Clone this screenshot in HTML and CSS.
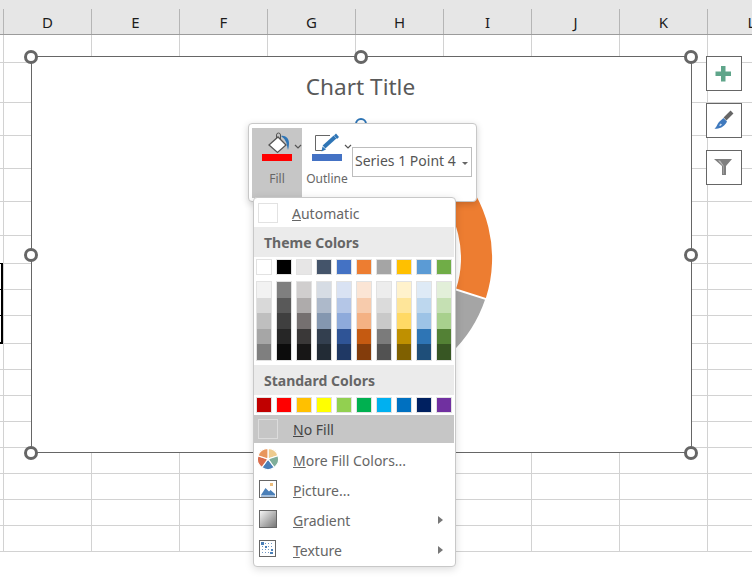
FILE: index.html
```html
<!DOCTYPE html>
<html lang="en">
<head>
  <meta charset="UTF-8" />
  <title>Chart fill menu</title>
  <link rel="stylesheet" href="styles.css">
</head>
<body>
  <div class="col-heads">
    <div class="col-head stub"></div>
    <div class="col-head">D</div>
    <div class="col-head">E</div>
    <div class="col-head">F</div>
    <div class="col-head">G</div>
    <div class="col-head">H</div>
    <div class="col-head">I</div>
    <div class="col-head">J</div>
    <div class="col-head">K</div>
    <div class="col-head">L</div>
  </div>

  <div class="rows">
    <div class="row h28"></div>
    <div class="row h40"></div>
    <div class="row h33"></div>
    <div class="row h33"></div>
    <div class="row h33"></div>
    <div class="row h34"></div>
    <div class="row h28"></div>
    <div class="row"></div>
    <div class="row"></div>
    <div class="row h28"></div>
    <div class="row"></div>
    <div class="row"></div>
    <div class="row"></div>
    <div class="row"></div>
    <div class="row"></div>
    <div class="row"></div>
    <div class="row"></div>
    <div class="row"></div>
  </div>

  <!-- selected cells peeking out at the left edge -->
  <div class="selected">
    <div class="sel-cell"></div>
    <div class="sel-cell"></div>
    <div class="sel-cell last"></div>
  </div>

  <div class="chart">
    <div class="chart-title">Chart Title</div>
    <svg class="donut" width="659" height="395" viewBox="32 57 659 395">
      <path fill="#ed7d31" d="M453.6 165.4 A131 131 0 0 1 485.9 298.0 L456.2 288.6 A100 100 0 0 0 431.7 187.3 Z" />
      <path fill="#a5a5a5" d="M485 299.8 A131 131 0 0 1 395 384.5 L387 354.6 A100 100 0 0 0 455.8 290.5 Z" />
      <path fill="none" stroke="#2e75b6" stroke-width="2" d="M356 124 A5 5 0 0 1 366 124" />
    </svg>
    <span class="handle h-tl"></span>
    <span class="handle h-tc"></span>
    <span class="handle h-tr"></span>
    <span class="handle h-ml"></span>
    <span class="handle h-mr"></span>
    <span class="handle h-bl"></span>
    <span class="handle h-bc"></span>
    <span class="handle h-br"></span>
  </div>

  <div class="side-tools">
    <div class="side-btn">
      <svg width="34" height="33" viewBox="0 0 34 33"><path fill="#5fa58a" d="M14 9h4.500v5.500H24v4.500h-5.500v5.500H14V19H8.500v-4.500H14z" /></svg>
    </div>
    <div class="side-btn">
      <svg width="34" height="33" viewBox="0 0 34 33">
        <path fill="none" stroke="#666" stroke-width="4" d="M25 8 L18 15" />
        <path fill="#3f79bd" d="M16.5 14 L20 17.5 C18 22 13 25.5 7.5 24.5 C10 23 10 20 12 18 C13.5 16.5 15 15.5 16.5 14Z" />
        <path fill="#c9d9ec" d="M13.500 19.500 L15 20.500 L13.500 22 L12 21.500Z" />
      </svg>
    </div>
    <div class="side-btn">
      <svg width="34" height="33" viewBox="0 0 34 33">
        <path fill="#7f7f7f" d="M7 8 H25 L19 15 V24 H15 V15 Z" />
        <path fill="#bdbdbd" d="M11 9.500 L16 15 V23 H16.500 V14.500 L13 9.500 Z" />
      </svg>
    </div>
  </div>

  <div class="toolbar">
    <div class="tool active">
      <svg class="tool-icon" width="50" height="26" viewBox="0 0 50 26">
        <path fill="none" stroke="#555" stroke-width="1" d="M24.500 13 V7 a2 2 0 0 1 4 0 V13" />
        <path fill="#fff" stroke="#555" stroke-width="1.300" d="M17 17 L26 9 L34 17 L25.500 24.500 Z" />
        <path fill="#2e75b6" d="M29 8 C33 7 37 10 37 15 C37 18 36.500 20 36 22 C35 19 35 15 33.500 13 C32.500 11 31 9.500 29 8Z" />
        <path fill="none" stroke="#555" stroke-width="1.200" d="M43 17 l3 3 l3 -3" />
      </svg>
      <div class="tool-swatch red"></div>
      <div class="tool-label">Fill</div>
    </div>
    <div class="tool">
      <svg class="tool-icon" width="50" height="26" viewBox="0 0 50 26">
        <path fill="none" stroke="#666" stroke-width="1" d="M28 7.500 H13.500 V22.500 H20" />
        <path fill="none" stroke="#2e75b6" stroke-width="4" d="M22 19 L33 9" />
        <path fill="#2e75b6" d="M19.500 23.500 L20.500 18.500 L24 21.500Z" />
        <path fill="#2e75b6" d="M34 5.500 L37 9 L35 11 L32 7.500Z" />
        <path fill="none" stroke="#555" stroke-width="1.200" d="M43 17 l3 3 l3 -3" />
      </svg>
      <div class="tool-swatch blue"></div>
      <div class="tool-label">Outline</div>
    </div>
    <div class="series-select">
      <span class="series-name">Series 1 Point 4</span>
      <span class="caret"></span>
    </div>
  </div>

  <div class="menu">
    <div class="menu-item first">
      <span class="icon-cell"><span class="big-swatch"></span></span>
      <span class="item-text"><u>A</u>utomatic</span>
    </div>

    <div class="menu-head">Theme Colors</div>
    <div class="swatches theme">
      <span class="sw c-ffffff"></span><span class="sw c-000000"></span><span class="sw c-e7e6e6"></span><span class="sw c-44546a"></span><span class="sw c-4472c4"></span><span class="sw c-ed7d31"></span><span class="sw c-a5a5a5"></span><span class="sw c-ffc000"></span><span class="sw c-5b9bd5"></span><span class="sw c-70ad47"></span>
    </div>
    <div class="swatches shades">
      <div class="shade"><i class="c-f2f2f2"></i><i class="c-d9d9d9"></i><i class="c-bfbfbf"></i><i class="c-a6a6a6"></i><i class="c-7f7f7f"></i></div>
      <div class="shade"><i class="c-7f7f7f"></i><i class="c-595959"></i><i class="c-3f3f3f"></i><i class="c-262626"></i><i class="c-0c0c0c"></i></div>
      <div class="shade"><i class="c-d0cece"></i><i class="c-aeabab"></i><i class="c-757070"></i><i class="c-3a3838"></i><i class="c-171616"></i></div>
      <div class="shade"><i class="c-d6dce4"></i><i class="c-adb9ca"></i><i class="c-8497b0"></i><i class="c-333f4f"></i><i class="c-222b35"></i></div>
      <div class="shade"><i class="c-d9e2f3"></i><i class="c-b4c6e7"></i><i class="c-8eaadb"></i><i class="c-2f5496"></i><i class="c-1f3864"></i></div>
      <div class="shade"><i class="c-fbe5d5"></i><i class="c-f7cbac"></i><i class="c-f4b183"></i><i class="c-c55a11"></i><i class="c-833c0b"></i></div>
      <div class="shade"><i class="c-ededed"></i><i class="c-dbdbdb"></i><i class="c-c9c9c9"></i><i class="c-7b7b7b"></i><i class="c-525252"></i></div>
      <div class="shade"><i class="c-fff2cc"></i><i class="c-fee599"></i><i class="c-ffd965"></i><i class="c-bf9000"></i><i class="c-7f6000"></i></div>
      <div class="shade"><i class="c-deeaf6"></i><i class="c-bdd7ee"></i><i class="c-9dc3e6"></i><i class="c-2e75b5"></i><i class="c-1e4e79"></i></div>
      <div class="shade"><i class="c-e2efd9"></i><i class="c-c5e0b3"></i><i class="c-a8d08d"></i><i class="c-538135"></i><i class="c-375623"></i></div>
    </div>

    <div class="menu-head">Standard Colors</div>
    <div class="swatches standard">
      <span class="sw c-c00000"></span><span class="sw c-ff0000"></span><span class="sw c-ffc000"></span><span class="sw c-ffff00"></span><span class="sw c-92d050"></span><span class="sw c-00b050"></span><span class="sw c-00b0f0"></span><span class="sw c-0070c0"></span><span class="sw c-002060"></span><span class="sw c-7030a0"></span>
    </div>

    <div class="menu-item no-fill">
      <span class="icon-cell"><span class="big-swatch"></span></span>
      <span><u>N</u>o Fill</span>
    </div>

    <div class="menu-item plain">
      <span class="icon-cell">
        <svg width="22" height="22" viewBox="-11 -11 22 22">
          <g stroke="#fff" stroke-width="1.200">
            <path fill="#eecb8e" d="M0 0 L0 -10.500 A10.500 10.500 0 0 1 10 -3.200Z" />
            <path fill="#7fae9a" d="M0 0 L10 -3.200 A10.500 10.500 0 0 1 6.200 8.500Z" />
            <path fill="#4a7fb8" d="M0 0 L6.200 8.500 A10.500 10.500 0 0 1 -6.200 8.500Z" />
            <path fill="#d96c4c" d="M0 0 L-6.200 8.500 A10.500 10.500 0 0 1 -10 -3.200Z" />
            <path fill="#e8965c" d="M0 0 L-10 -3.200 A10.500 10.500 0 0 1 0 -10.500Z" />
          </g>
          <circle r="1.500" fill="#fff" />
        </svg>
      </span>
      <span><u>M</u>ore Fill Colors...</span>
    </div>
    <div class="menu-item plain">
      <span class="icon-cell">
        <svg width="18" height="18" viewBox="0 0 18 18">
          <rect x="0.500" y="0.500" width="17" height="17" fill="#fff" stroke="#666" />
          <rect x="11" y="3" width="3" height="3" fill="#ecbd7c" />
          <path fill="#4a7fb8" d="M2 15 L6.500 8 L10 11.500 L11.500 10 L16 14 V15Z" />
          <path fill="none" stroke="#4a7fb8" d="M2 16 H16" />
        </svg>
      </span>
      <span><u>P</u>icture...</span>
    </div>
    <div class="menu-item plain">
      <span class="icon-cell"><span class="gradient-icon"></span></span>
      <span><u>G</u>radient</span>
      <span class="arrow"></span>
    </div>
    <div class="menu-item plain">
      <span class="icon-cell">
        <svg width="18" height="18" viewBox="0 0 18 18">
          <defs>
            <pattern id="dots" width="3" height="3" patternUnits="userSpaceOnUse"><rect width="1" height="1" fill="#6f97c4" /></pattern>
          </defs>
          <rect x="0.500" y="0.500" width="16" height="16" fill="#fff" stroke="#666" />
          <path fill="url(#dots)" d="M2 2 H15 V15 H2Z" />
          <path fill="#4a7fb8" d="M2 2h3v3h-3z M6 6h2v2h-2z M12 9h2v2h-2z M11 12h3v2h-3z" />
        </svg>
      </span>
      <span><u>T</u>exture</span>
      <span class="arrow"></span>
    </div>
  </div>
</body>
</html>
```

FILE: styles.css
```css
html, body {
  margin: 0;
  height: 584px;
  overflow: hidden;
}
body {
  position: relative;
  width: 752px;
  background-color: #fff;
  font-family: "Noto Sans", sans-serif;
}

/* sheet */
.col-heads {
  display: flex;
  height: 35px;
  box-sizing: border-box;
  background-color: #e6e6e6;
  border-bottom: 1px solid #9b9b9b;
  overflow: hidden;
}
.col-head {
  flex: 0 0 88px;
  box-sizing: border-box;
  margin-top: 9px;
  height: 25px;
  line-height: 26px;
  text-align: center;
  font-size: 15px;
  color: #1c1c1c;
  border-right: 1px solid #b5b5b5;
}
.col-head.stub {
  flex-basis: 4px;
}
.rows {
  background-image: linear-gradient(90deg, #d2d2d2 1px, transparent 1px);
  background-size: 88px 100%;
  background-position: 3px 0;
}
.row {
  height: 26px;
  box-sizing: border-box;
  border-bottom: 1px solid #d2d2d2;
}
.row.h28 { height: 28px; }
.row.h33 { height: 33px; }
.row.h34 { height: 34px; }
.row.h40 { height: 40px; }

.selected {
  position: absolute;
  left: 0;
  top: 263px;
  width: 3px;
  box-sizing: border-box;
  border-top: 1px solid #000;
  border-right: 2px solid #000;
}
.sel-cell {
  height: 26px;
  box-sizing: border-box;
  border-bottom: 1px solid #000;
}
.sel-cell.last {
  height: 28px;
  border-bottom-width: 2px;
}

/* chart */
.chart {
  position: absolute;
  left: 31px;
  top: 56px;
  width: 661px;
  height: 397px;
  box-sizing: border-box;
  background-color: #fff;
  border: 1px solid #666;
}
.chart-title {
  position: relative;
  margin-top: 15px;
  margin-right: 2px;
  text-align: center;
  font-size: 22.6px;
  line-height: 30px;
  color: #595959;
}
.donut {
  position: absolute;
  left: 0;
  top: 0;
}
.handle {
  position: absolute;
  width: 14px;
  height: 14px;
  box-sizing: border-box;
  background-color: #fff;
  border: 3px solid #666;
  border-radius: 50%;
}
.h-tl { left: -8px; top: -7px; }
.h-tc { left: 322px; top: -7px; }
.h-tr { left: 652px; top: -7px; }
.h-ml { left: -8px; top: 191px; }
.h-mr { left: 652px; top: 191px; }
.h-bl { left: -8px; top: 389px; }
.h-bc { left: 322px; top: 389px; }
.h-br { left: 652px; top: 389px; }

.side-tools {
  position: absolute;
  left: 706px;
  top: 56px;
  display: flex;
  flex-direction: column;
  gap: 12px;
}
.side-btn {
  width: 36px;
  height: 35px;
  box-sizing: border-box;
  background-color: #fff;
  border: 1px solid #666;
}
.side-btn svg {
  display: block;
}

/* mini toolbar */
.toolbar {
  position: absolute;
  left: 248px;
  top: 123px;
  width: 229px;
  height: 79px;
  box-sizing: border-box;
  display: flex;
  align-items: flex-start;
  padding: 4px 0 0 3px;
  background-color: #fff;
  border: 1px solid #c8c8c8;
  border-radius: 4px;
  box-shadow: 0 2px 7px rgba(0, 0, 0, 0.18);
}
.tool {
  width: 50px;
  height: 70px;
}
.tool.active {
  background-color: #c6c6c6;
}
.tool-icon {
  display: block;
}
.tool-swatch {
  width: 30px;
  height: 7px;
  margin-left: 10px;
}
.tool-swatch.red { background-color: #ff0000; }
.tool-swatch.blue { background-color: #4472c4; }
.tool-label {
  margin-top: 10px;
  line-height: 16px;
  text-align: center;
  font-size: 12px;
  color: #666;
}
.series-select {
  display: flex;
  align-items: center;
  justify-content: space-between;
  width: 120px;
  height: 30px;
  box-sizing: border-box;
  margin-top: 19px;
  padding: 0 3px 0 2px;
  border: 1px solid #bdbdbd;
  font-size: 14px;
  color: #555;
  white-space: nowrap;
}
.series-name {
  margin-bottom: 3px;
}
.caret {
  width: 0;
  height: 0;
  margin-top: 2px;
  border: 3px solid transparent;
  border-top: 3px solid #666;
  border-bottom: 0;
}

/* fill dropdown */
.menu {
  position: absolute;
  left: 253px;
  top: 197px;
  width: 203px;
  height: 370px;
  box-sizing: border-box;
  background-color: #fff;
  border: 1px solid #c8c8c8;
  border-radius: 4px;
  box-shadow: 0 2px 8px rgba(0, 0, 0, 0.15);
  font-size: 14px;
  color: #666;
}
.menu-item {
  display: flex;
  align-items: center;
  margin-right: 1px;
  white-space: nowrap;
}
.menu-item.first {
  height: 29px;
}
.item-text {
  margin-top: 2px;
  margin-left: -1px;
}
.menu-item.no-fill {
  height: 28px;
  margin-top: 2px;
  margin-bottom: 2px;
  background-color: #c6c6c6;
  color: #444;
}
.menu-item.plain {
  height: 30px;
}
.plain .icon-cell {
  margin-bottom: 2px;
}
.icon-cell {
  display: flex;
  align-items: center;
  justify-content: center;
  flex: 0 0 27px;
  margin-right: 12px;
}
.big-swatch {
  width: 20px;
  height: 20px;
  box-sizing: border-box;
  border: 1px solid #e2e2e2;
}
.no-fill .big-swatch {
  border-color: #dcdcdc;
}
.menu-head {
  height: 30px;
  line-height: 32px;
  margin-right: 1px;
  padding-left: 10px;
  background-color: #ebebeb;
  font-weight: 700;
  font-size: 14px;
  color: #666;
}
.swatches {
  display: flex;
  gap: 4px;
  padding-left: 2px;
}
.swatches.theme { margin-top: 2px; }
.swatches.shades { margin-top: 6px; margin-bottom: 4px; }
.swatches.standard { margin-top: 2px; }
.sw {
  display: block;
  width: 16px;
  height: 16px;
  box-sizing: border-box;
  border: 1px solid #e2e2e2;
}
.shade {
  display: flex;
  flex-direction: column;
  width: 16px;
  height: 80px;
  box-sizing: border-box;
  border: 1px solid #e2e2e2;
}
.shade i {
  flex: 1;
}
.gradient-icon {
  width: 18px;
  height: 18px;
  box-sizing: border-box;
  border: 1px solid #666;
  background-image: linear-gradient(135deg, #f4f4f4, #777);
}
.arrow {
  margin-left: auto;
  margin-right: 11px;
  width: 0;
  height: 0;
  border-left: 5px solid #777;
  border-top: 4px solid transparent;
  border-bottom: 4px solid transparent;
}

/* palette */
.c-ffffff { background-color: #ffffff; }
.c-000000 { background-color: #000000; }
.c-e7e6e6 { background-color: #e7e6e6; }
.c-44546a { background-color: #44546a; }
.c-4472c4 { background-color: #4472c4; }
.c-ed7d31 { background-color: #ed7d31; }
.c-a5a5a5 { background-color: #a5a5a5; }
.c-ffc000 { background-color: #ffc000; }
.c-5b9bd5 { background-color: #5b9bd5; }
.c-70ad47 { background-color: #70ad47; }
.c-f2f2f2 { background-color: #f2f2f2; }
.c-d9d9d9 { background-color: #d9d9d9; }
.c-bfbfbf { background-color: #bfbfbf; }
.c-a6a6a6 { background-color: #a6a6a6; }
.c-7f7f7f { background-color: #7f7f7f; }
.c-595959 { background-color: #595959; }
.c-3f3f3f { background-color: #3f3f3f; }
.c-262626 { background-color: #262626; }
.c-0c0c0c { background-color: #0c0c0c; }
.c-d0cece { background-color: #d0cece; }
.c-aeabab { background-color: #aeabab; }
.c-757070 { background-color: #757070; }
.c-3a3838 { background-color: #3a3838; }
.c-171616 { background-color: #171616; }
.c-d6dce4 { background-color: #d6dce4; }
.c-adb9ca { background-color: #adb9ca; }
.c-8497b0 { background-color: #8497b0; }
.c-333f4f { background-color: #333f4f; }
.c-222b35 { background-color: #222b35; }
.c-d9e2f3 { background-color: #d9e2f3; }
.c-b4c6e7 { background-color: #b4c6e7; }
.c-8eaadb { background-color: #8eaadb; }
.c-2f5496 { background-color: #2f5496; }
.c-1f3864 { background-color: #1f3864; }
.c-fbe5d5 { background-color: #fbe5d5; }
.c-f7cbac { background-color: #f7cbac; }
.c-f4b183 { background-color: #f4b183; }
.c-c55a11 { background-color: #c55a11; }
.c-833c0b { background-color: #833c0b; }
.c-ededed { background-color: #ededed; }
.c-dbdbdb { background-color: #dbdbdb; }
.c-c9c9c9 { background-color: #c9c9c9; }
.c-7b7b7b { background-color: #7b7b7b; }
.c-525252 { background-color: #525252; }
.c-fff2cc { background-color: #fff2cc; }
.c-fee599 { background-color: #fee599; }
.c-ffd965 { background-color: #ffd965; }
.c-bf9000 { background-color: #bf9000; }
.c-7f6000 { background-color: #7f6000; }
.c-deeaf6 { background-color: #deeaf6; }
.c-bdd7ee { background-color: #bdd7ee; }
.c-9dc3e6 { background-color: #9dc3e6; }
.c-2e75b5 { background-color: #2e75b5; }
.c-1e4e79 { background-color: #1e4e79; }
.c-e2efd9 { background-color: #e2efd9; }
.c-c5e0b3 { background-color: #c5e0b3; }
.c-a8d08d { background-color: #a8d08d; }
.c-538135 { background-color: #538135; }
.c-375623 { background-color: #375623; }
.c-c00000 { background-color: #c00000; }
.c-ff0000 { background-color: #ff0000; }
.c-ffff00 { background-color: #ffff00; }
.c-92d050 { background-color: #92d050; }
.c-00b050 { background-color: #00b050; }
.c-00b0f0 { background-color: #00b0f0; }
.c-0070c0 { background-color: #0070c0; }
.c-002060 { background-color: #002060; }
.c-7030a0 { background-color: #7030a0; }
```
